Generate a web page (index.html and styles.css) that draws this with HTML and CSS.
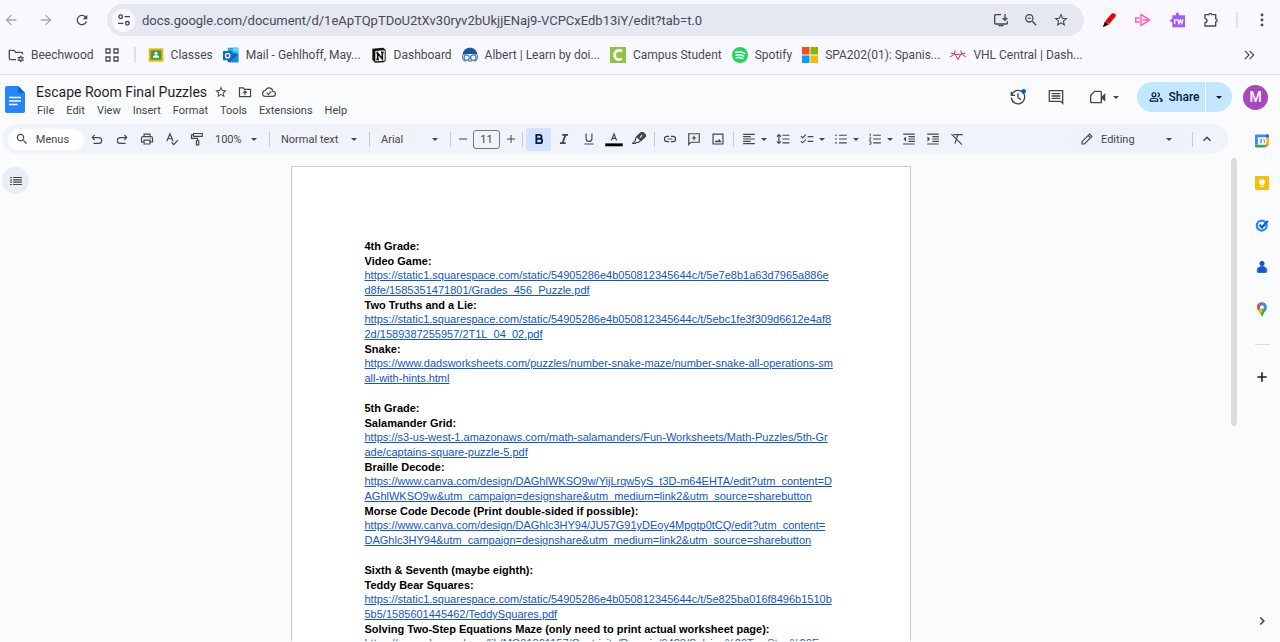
FILE: index.html
```html
<!DOCTYPE html>
<html lang="en">
<head>
<meta charset="utf-8">
<title>Escape Room Final Puzzles</title>
<link rel="stylesheet" href="styles.css">
</head>
<body>
<nav class="browser-bar" aria-label="Browser">
  <button class="nav-btn faded" aria-label="Back"><svg viewBox="0 0 24 24"><path d="M20 11H7.8l5.6-5.6L12 4l-8 8 8 8 1.4-1.4L7.8 13H20z"/></svg></button>
  <button class="nav-btn faded" aria-label="Forward"><svg viewBox="0 0 24 24"><path d="M12 4l-1.4 1.4 5.6 5.6H4v2h12.2l-5.6 5.6L12 20l8-8z"/></svg></button>
  <button class="nav-btn" aria-label="Reload"><svg viewBox="0 0 24 24"><path d="M17.65 6.35A8 8 0 1 0 19.73 14h-2.08A6 6 0 1 1 12 6c1.66 0 3.14.69 4.22 1.78L13 11h7V4z"/></svg></button>
  <div class="omnibox">
    <button class="site-info" aria-label="Site information"><svg viewBox="0 0 24 24" class="line"><circle cx="7" cy="7" r="2.7"/><path d="M13 7h8M3 17h8"/><circle cx="17" cy="17" r="2.7"/></svg></button>
    <input class="url" type="text" aria-label="Address" value="docs.google.com/document/d/1eApTQpTDoU2tXv30ryv2bUkjjENaj9-VCPCxEdb13iY/edit?tab=t.0">
    <button class="bar-icon" aria-label="Install"><svg viewBox="0 0 24 24" class="line"><path d="M12 4H4a1.500 1.500 0 0 0-1.500 1.500v11A1.500 1.500 0 0 0 4 18h16a1.500 1.500 0 0 0 1.500-1.500V14M18 3v9M14.500 9l3.500 3.500L21.500 9M8 20.500h8"/></svg></button>
    <button class="bar-icon" aria-label="Zoom"><svg viewBox="0 0 24 24"><path d="M15.500 14h-.8l-.3-.3A6.500 6.500 0 1 0 13.700 14.400l.3.3v.8l5 5 1.500-1.500zm-6 0a4.500 4.500 0 1 1 0-9 4.500 4.500 0 0 1 0 9zM7 8.700h5v1.600H7z"/></svg></button>
    <button class="bar-icon" aria-label="Bookmark this tab"><svg viewBox="0 0 24 24"><path d="M22 9.240l-7.190-.62L12 2 9.190 8.630 2 9.240l5.460 4.730L5.820 21 12 17.270 18.180 21l-1.630-7.030zM12 15.400l-3.760 2.270 1-4.280-3.320-2.880 4.380-.38L12 6.100l1.710 4.040 4.380.38-3.320 2.880 1 4.280z"/></svg></button>
  </div>
  <div class="extensions">
    <button class="ext-btn" aria-label="Pen extension"><svg viewBox="0 0 24 24"><path fill="#e00" d="M20.500 2.500c2 1 2.500 2.500 1.200 4.400L12.500 18 6.500 13.500 14.500 4c1.500-1.800 3.500-2.500 6-1.500z"/><path fill="#300" d="M6 14l6 4.500L4 22.500l-1-.8z"/></svg></button>
    <button class="ext-btn" aria-label="Screencast extension"><svg viewBox="0 0 24 24" fill="none" stroke="#ff5ab8" stroke-width="2.200"><path d="M9 4v16l13-8z"/><path d="M1 9h6M1 15h6M1 8v8M11 12h9"/></svg></button>
    <button class="ext-btn" aria-label="Read and write extension"><svg viewBox="0 0 24 24"><path fill="#a259ff" d="M5 5h5.500V3a2.200 2.200 0 0 1 4.400 0v2H24v18H5v-8H3a2.200 2.200 0 0 1 0-4h2z"/><path fill="none" stroke="#fff" stroke-width="2" d="M8.500 18v-7M8.500 14q1-2.500 3.500-2M13 11l2 6 2-5 2 5 2-6"/></svg></button>
    <button class="ext-btn" aria-label="Extensions"><svg viewBox="0 0 24 24" class="line"><path d="M3 4h6.200a2 2 0 0 1 4 0H19v6.200a2.300 2.300 0 0 1 0 4.600V21H3v-5a3 3 0 0 0 0-6z"/></svg></button>
    <span class="bar-rule"></span>
    <button class="ext-btn" aria-label="Browser menu"><svg viewBox="0 0 24 24"><circle cx="12" cy="4.500" r="2.200"/><circle cx="12" cy="12" r="2.200"/><circle cx="12" cy="19.500" r="2.200"/></svg></button>
  </div>
</nav>

<nav class="bookmarks" aria-label="Bookmarks">
  <a href="#"><svg viewBox="0 0 24 24" class="line"><path d="M12 19H4a2 2 0 0 1-2-2V5h7l2.500 3H20a2 2 0 0 1 2 2v1"/><circle cx="19" cy="18" r="2.600"/><path d="M19 13v2m0 6v2m-4.500-7.500l1.700 1m5.600 3l1.700 1m0-5l-1.700 1m-5.600 3l-1.700 1"/></svg>Beechwood</a>
  <a href="#" aria-label="Apps"><svg viewBox="0 0 24 24" class="line"><path d="M3 3h6v6H3zM15 3h6v6h-6zM3 15h6v6H3zM15 15h6v6h-6z"/></svg></a>
  <span class="bar-rule"></span>
  <a href="#"><svg viewBox="0 0 24 24"><path fill="#f4b400" d="M1 2h22v20H1z"/><path fill="#3c9a50" d="M4 5h16v14H4z"/><circle cx="12" cy="9.500" r="2.300" fill="#fff"/><path fill="#fff" d="M7.500 16v-1.500c0-3 9-3 9 0V16z"/></svg>Classes</a>
  <a href="#"><svg viewBox="0 0 24 24"><path fill="#28a8ea" d="M7 1h16v11H7z"/><path fill="#50d9ff" d="M15 1h8v6h-8z"/><path fill="#0a64b8" d="M7 8l16 3v12H7z"/><path fill="#1490df" d="M23 11v12H9z"/><rect y="6" width="14" height="14" rx="1" fill="#0f6cbd"/><circle cx="7" cy="13" r="3.200" fill="none" stroke="#fff" stroke-width="2"/></svg>Mail - Gehlhoff, May...</a>
  <a href="#"><svg viewBox="0 0 24 24"><path fill="#111" d="M2 2.500L18 1l4 3v17l-3 2-13 .5L2 19z"/><path fill="#fff" d="M6.500 6L20.500 5v15.500l-14 1z"/><path fill="none" stroke="#111" stroke-width="2.400" d="M10 18V9l7 9V8M8 9h3M15 8h4M8 18.500h4"/></svg>Dashboard</a>
  <a href="#"><svg viewBox="0 0 24 24"><path fill="#18589c" d="M1 12C1 5 6 1 12 1s11 4 11 11c-6-2-16-2-22 0z"/><g fill="#fff" stroke="#3978b5" stroke-width="1.800"><circle cx="7" cy="16" r="4"/><circle cx="17" cy="16" r="4"/></g><path fill="none" stroke="#3978b5" stroke-width="1.500" d="M1 12v5q1 4 4 5M23 12v5q-1 4-4 5M9 21h6"/></svg>Albert | Learn by doi...</a>
  <a href="#"><svg viewBox="0 0 24 24"><path fill="#8cc63f" d="M0 0h24v24H0z"/><path fill="none" stroke="#fff" stroke-width="4" d="M18 6.500c-5-3-11-1-11 5.500s6 8.500 11 5.500"/></svg>Campus Student</a>
  <a href="#"><svg viewBox="0 0 24 24"><circle cx="12" cy="12" r="12" fill="#1ed760"/><path fill="none" stroke="#fff" stroke-width="2.300" stroke-linecap="round" d="M5.500 8q7-2 13.500 1.500M6 12.300q6-1.800 11.500 1.300M6.500 16.300q5-1.500 9.500 1"/></svg>Spotify</a>
  <a href="#"><svg viewBox="0 0 24 24"><path fill="#f25022" d="M0 0h11.300v11.300H0z"/><path fill="#7fba00" d="M12.700 0H24v11.300H12.700z"/><path fill="#00a4ef" d="M0 12.700h11.300V24H0z"/><path fill="#ffb900" d="M12.700 12.700H24V24H12.700z"/></svg>SPA202(01): Spanis...</a>
  <a href="#"><svg viewBox="0 0 24 24" fill="none" stroke="#d8343f" stroke-width="1.500"><path d="M0 15l6-4 2-6M24 15l-6-4-2-6M1 9l7 2 4 8 4-8 7-2M8 11h8"/></svg>VHL Central | Dash...</a>
  <button class="overflow" aria-label="More bookmarks"><svg viewBox="0 0 24 24" class="line"><path d="M5 5l7 7-7 7M13 5l7 7-7 7"/></svg></button>
</nav>

<header class="doc-header">
  <a href="#" class="docs-logo" aria-label="Docs home"><svg viewBox="0 0 20 27"><path fill="#2684fc" d="M2 0h11l7 7v18a2 2 0 0 1-2 2H2a2 2 0 0 1-2-2V2a2 2 0 0 1 2-2z"/><path fill="#0066da" d="M13 0l7 7h-5a2 2 0 0 1-2-2z"/><path stroke="#fff" stroke-width="1.500" d="M4 11.500h12M4 15h12M4 18.500h8.500"/></svg></a>
  <div class="doc-heading">
    <div class="title-row">
      <h1>Escape Room Final Puzzles</h1>
      <button class="small-icon" aria-label="Star"><svg viewBox="0 0 24 24"><path d="M22 9.240l-7.190-.62L12 2 9.190 8.630 2 9.240l5.460 4.730L5.820 21 12 17.270 18.180 21l-1.630-7.030zM12 15.400l-3.760 2.270 1-4.280-3.320-2.880 4.380-.38L12 6.100l1.710 4.040 4.380.38-3.320 2.880 1 4.280z"/></svg></button>
      <button class="small-icon" aria-label="Move"><svg viewBox="0 0 24 24" class="line"><path d="M2.500 5H9l2 2.500h10.500V20h-19zM12 17.500v-7M8.800 13.500l3.200-3.200 3.200 3.200"/></svg></button>
      <button class="small-icon" aria-label="Document status"><svg viewBox="0 0 24 24" class="line"><path d="M6.500 19.500C3.500 19.500 1 17.500 1 14.500c0-2.700 2-4.700 4.700-5C7 6.500 9.300 4.800 12 4.800c3.500 0 6 2.400 6.500 5.900 2.700.2 4.500 2 4.500 4.400 0 2.500-2 4.400-4.500 4.400zM8 13l3 3 5-5"/></svg></button>
    </div>
    <nav class="menus" aria-label="Document menus">
      <button>File</button><button>Edit</button><button>View</button><button>Insert</button><button>Format</button><button>Tools</button><button>Extensions</button><button>Help</button>
    </nav>
  </div>
  <div class="doc-actions">
    <button class="action" aria-label="Version history"><svg viewBox="0 0 24 24" class="line"><path d="M2 4v5.500h5.500M2.500 9A10 10 0 1 1 2 13M12 6.500V13l4.500 3"/><circle cx="20.500" cy="3.500" r="3.500" fill="#0b57d0" stroke="none"/></svg></button>
    <button class="action" aria-label="Comments"><svg viewBox="0 0 24 24" class="line"><path d="M2 2.500h20V21.500l-3-3H2zM5.500 7h13M5.500 10.500h13M5.500 14h13"/></svg></button>
    <button class="action meet" aria-label="Meet"><svg viewBox="0 0 24 24" class="line"><path d="M7 3.500h8a2 2 0 0 1 2 2V20.500H2a1 1 0 0 1-1-1V9.500z"/><path d="M17 12l6-6v13l-6-5z" fill="#444746" stroke="none"/></svg><i class="caret"></i></button>
    <div class="share">
      <button class="share-main"><svg viewBox="0 0 24 24" class="line"><circle cx="8.500" cy="8" r="3.300"/><path d="M2 19v-1.500c0-4.500 13-4.500 13 0V19zM14.500 4.700a3.300 3.300 0 1 1 0 6.600M18 14c3 .8 4.500 2 4.500 5h-3.500"/></svg>Share</button>
      <button class="share-more" aria-label="Sharing options"><i class="caret"></i></button>
    </div>
    <button class="avatar" aria-label="Account">M</button>
  </div>
</header>

<div class="workspace">
  <div class="editor">
    <div class="toolbar" role="toolbar" aria-label="Formatting">
      <button class="menu-search"><svg viewBox="0 0 24 24"><path d="M15.500 14h-.8l-.3-.3A6.500 6.500 0 1 0 13.700 14.400l.3.3v.8l5 5 1.500-1.500zm-6 0a4.500 4.500 0 1 1 0-9 4.500 4.500 0 0 1 0 9z"/></svg>Menus</button>
      <button class="tool" aria-label="Undo"><svg viewBox="0 0 24 24" class="line"><path d="M8 5L4 9.500 8 14M4.500 9.500H15a5 5 0 0 1 0 10H6"/></svg></button>
      <button class="tool" aria-label="Redo"><svg viewBox="0 0 24 24" class="line"><path d="M16 5l4 4.500-4 4.500M19.500 9.500H9a5 5 0 0 0 0 10h9"/></svg></button>
      <button class="tool" aria-label="Print"><svg viewBox="0 0 24 24" class="line"><path d="M7 8V3.500h10V8M6.500 17H2.500v-6a3 3 0 0 1 3-3h13a3 3 0 0 1 3 3v6h-4M7 14h10v6.500H7z"/><path d="M17 11.200h1.500"/></svg></button>
      <button class="tool" aria-label="Spelling"><svg viewBox="0 0 24 24" class="line"><path d="M3 16L8.500 3 14 16M5 11.500h7M11 17.500l4 4 7-7.500"/></svg></button>
      <button class="tool" aria-label="Paint format"><svg viewBox="0 0 24 24" class="line"><path d="M6 2.500h15v5H6zM6 5H2.500v6H13v4M11 15h4v7h-4z"/></svg></button>
      <label class="pick zoom"><select aria-label="Zoom"><option>100%</option></select><i class="caret"></i></label>
      <span class="rule"></span>
      <label class="pick style"><select aria-label="Styles"><option>Normal text</option></select><i class="caret"></i></label>
      <span class="rule"></span>
      <label class="pick font"><select aria-label="Font"><option>Arial</option></select><i class="caret"></i></label>
      <span class="rule"></span>
      <button class="step" aria-label="Decrease font size"><svg viewBox="0 0 24 24" class="line"><path d="M4 12h16"/></svg></button>
      <input class="size" type="text" aria-label="Font size" value="11">
      <button class="step" aria-label="Increase font size"><svg viewBox="0 0 24 24" class="line"><path d="M4 12h16M12 4v16"/></svg></button>
      <span class="rule"></span>
      <button class="tool active" aria-label="Bold"><svg viewBox="0 0 24 24" fill="none" stroke="#041e49" stroke-width="3.200"><path d="M7.500 5h5.500a3.300 3.300 0 0 1 0 6.600H7.500zM7.500 11.600h6.300a3.700 3.700 0 0 1 0 7.400H7.500z"/></svg></button>
      <button class="tool" aria-label="Italic"><svg viewBox="0 0 24 24" class="line heavy"><path d="M9 5h10M5 19h10M14.500 5l-5 14"/></svg></button>
      <button class="tool" aria-label="Underline"><svg viewBox="0 0 24 24" class="line"><path d="M7 2.500V11a5 5 0 0 0 10 0V2.500M4 20.500h16"/></svg></button>
      <button class="tool" aria-label="Text color"><svg viewBox="0 0 24 24" class="wide-icon line"><path d="M7.500 14.500L12 3l4.500 11.500M9 11h6"/><path d="M-3 22h30" stroke="#000" stroke-width="5"/></svg></button>
      <button class="tool" aria-label="Highlight color"><svg viewBox="0 0 24 24" class="line"><path d="M8.500 8L15 14.500 11 18H7.500L6 19.500H1l5-5V11zM8.500 8L16 .8h2.500L23 5v2.500L15 14.500"/><path d="M9 7.500L16 1h2.500L22.500 5v2.500L16 14z" fill="#444746"/><path d="M13.500 9.500l4-4" stroke="#f0f3f9"/></svg></button>
      <span class="rule wide"></span>
      <button class="tool" aria-label="Insert link"><svg viewBox="0 0 24 24" class="line"><path d="M10.500 7.500H7a4.500 4.500 0 0 0 0 9h3.500M13.500 7.500H17a4.500 4.500 0 0 1 0 9h-3.500M8 12h8"/></svg></button>
      <button class="tool" aria-label="Add comment"><svg viewBox="0 0 24 24" class="line"><path d="M3 21.500V3h18v14.500H7zM12 6.500v7.500M8.200 10.300h7.600"/></svg></button>
      <button class="tool" aria-label="Insert image"><svg viewBox="0 0 24 24" class="line"><path d="M3.500 3.500h17v17h-17z"/><path d="M6 17.500l3-4 2.200 2.500 3-4 4 5.500z" fill="#444746" stroke="none"/></svg></button>
      <span class="rule"></span>
      <button class="tool drop" aria-label="Align"><svg viewBox="0 0 24 24" class="line"><path d="M2 4h20M2 8h13M2 12h20M2 16h13M2 20h20"/></svg><i class="caret"></i></button>
      <button class="tool" aria-label="Line spacing"><svg viewBox="0 0 24 24" class="line"><path d="M11 5.500h12M11 12h12M11 18.500h12M5 5v14M1.500 8L5 4.500 8.500 8M1.500 16L5 19.500 8.500 16"/></svg></button>
      <button class="tool drop" aria-label="Checklist"><svg viewBox="0 0 24 24" class="line"><path d="M13 8h10M13 16h10M1.500 7l3 3L10 4.500M1.500 15.500l3 3 5.500-5.500"/></svg><i class="caret"></i></button>
      <button class="tool drop" aria-label="Bulleted list"><svg viewBox="0 0 24 24" class="line"><path d="M8.500 5.500H22M8.500 12H22M8.500 18.500H22M2 5.500h3M2 12h3M2 18.500h3"/></svg><i class="caret"></i></button>
      <button class="tool drop" aria-label="Numbered list"><svg viewBox="0 0 24 24" class="line"><path d="M9 5.500h13M9 12h13M9 18.500h13"/><path stroke-width="1.300" d="M2.500 3.500H4v4M2 10h3.500L2 14h3.500M2 16.500h3.200v4.500H2M3 18.700h2"/></svg><i class="caret"></i></button>
      <button class="tool" aria-label="Decrease indent"><svg viewBox="0 0 24 24" class="line"><path d="M2 3.500h20M11 8h11M11 12h11M11 16h11M2 20.500h20"/><path d="M7 7.500v9L2.500 12z" fill="#444746" stroke="none"/></svg></button>
      <button class="tool" aria-label="Increase indent"><svg viewBox="0 0 24 24" class="line"><path d="M2 3.500h20M11 8h11M11 12h11M11 16h11M2 20.500h20"/><path d="M2.500 7.500v9L7 12z" fill="#444746" stroke="none"/></svg></button>
      <button class="tool" aria-label="Clear formatting"><svg viewBox="0 0 24 24" class="line"><path d="M6 4.500h16M13.500 4.500L8.500 20M2.500 3.500l18 18"/></svg></button>
      <label class="pick mode"><svg viewBox="0 0 24 24" class="line"><path d="M3.500 20.500v-4L16.500 3.500l4 4-13 13zM14 6l4 4"/></svg><select aria-label="Mode"><option>Editing</option></select><i class="caret"></i></label>
      <span class="rule"></span>
      <button class="collapse" aria-label="Hide the menus"><svg viewBox="0 0 24 24" class="line heavy"><path d="M5 15.500l7-7 7 7"/></svg></button>
    </div>

    <div class="canvas">
      <button class="outline" aria-label="Show outline"><svg viewBox="0 0 24 24" class="line"><path d="M7 6h15M7 10h15M7 14h15M7 18h15M2 6h3M2 10h3M2 14h3M2 18h3"/></svg></button>
      <main class="page">
        <section>
          <h2>4th Grade:</h2>
          <h2>Video Game:</h2>
          <p><a href="#">https://static1.squarespace.com/static/54905286e4b050812345644c/t/5e7e8b1a63d7965a886e<br>d8fe/1585351471801/Grades_456_Puzzle.pdf</a></p>
          <h2>Two Truths and a Lie:</h2>
          <p><a href="#">https://static1.squarespace.com/static/54905286e4b050812345644c/t/5ebc1fe3f309d6612e4af8<br>2d/1589387255957/2T1L_04_02.pdf</a></p>
          <h2>Snake:</h2>
          <p><a href="#">https://www.dadsworksheets.com/puzzles/number-snake-maze/number-snake-all-operations-sm<br>all-with-hints.html</a></p>
        </section>
        <section>
          <h2>5th Grade:</h2>
          <h2>Salamander Grid:</h2>
          <p><a href="#">https://s3-us-west-1.amazonaws.com/math-salamanders/Fun-Worksheets/Math-Puzzles/5th-Gr<br>ade/captains-square-puzzle-5.pdf</a></p>
          <h2>Braille Decode:</h2>
          <p><a href="#">https://www.canva.com/design/DAGhlWKSO9w/YijLrqw5yS_t3D-m64EHTA/edit?utm_content=D<br>AGhlWKSO9w&amp;utm_campaign=designshare&amp;utm_medium=link2&amp;utm_source=sharebutton</a></p>
          <h2>Morse Code Decode (Print double-sided if possible):</h2>
          <p><a href="#">https://www.canva.com/design/DAGhlc3HY94/JU57G91yDEoy4Mpgtp0tCQ/edit?utm_content=<br>DAGhlc3HY94&amp;utm_campaign=designshare&amp;utm_medium=link2&amp;utm_source=sharebutton</a></p>
        </section>
        <section>
          <h2>Sixth &amp; Seventh (maybe eighth):</h2>
          <h2>Teddy Bear Squares:</h2>
          <p><a href="#">https://static1.squarespace.com/static/54905286e4b050812345644c/t/5e825ba016f8496b1510b<br>5b5/1585601445462/TeddySquares.pdf</a></p>
          <h2>Solving Two-Step Equations Maze (only need to print actual worksheet page):</h2>
          <p><a href="#">https://www.slps.org/cms/lib/MO01001157/Centricity/Domain/9483/Solving%20TwoStep%20Equ</a></p>
        </section>
      </main>
      <div class="track"><div class="thumb"></div></div>
    </div>
  </div>

  <aside class="rail" aria-label="Side panel">
    <button aria-label="Calendar"><svg viewBox="0 0 24 24"><path fill="#4285f4" d="M0 3a2 2 0 0 1 2-2h20v5H5v12H0z"/><path fill="#fbbc04" d="M19 6h5v12h-5z"/><path fill="#34a853" d="M0 18h18v5H2a2 2 0 0 1-2-2z"/><path fill="#ea4335" d="M18 23v-5h6z"/><path fill="#1967d2" d="M19 1h3a2 2 0 0 1 2 2v3h-5z"/><path fill="#fff" d="M5 6h14v12H5z"/><path fill="none" stroke="#4285f4" stroke-width="1.500" d="M8 9h3v6H8M8.500 12H11M14 10l2-1v7"/></svg></button>
    <button aria-label="Keep"><svg viewBox="0 0 24 24"><rect width="24" height="24" rx="2" fill="#fbbc04"/><circle cx="12" cy="10" r="5" fill="#fff"/><path fill="#fff" d="M9.500 13h5v3h-5zM9.500 17h5v2h-5z"/></svg></button>
    <button aria-label="Tasks"><svg viewBox="0 0 24 24" fill="none"><circle cx="11.500" cy="13" r="8.500" stroke="#2684fc" stroke-width="3.800"/><path d="M7.500 11.500l4.500 4.500L22 5" stroke="#0066da" stroke-width="4"/></svg></button>
    <button aria-label="Contacts"><svg viewBox="0 0 24 24"><circle cx="12" cy="6" r="4.300" fill="#0b57d0"/><path fill="#2f7bf0" d="M3 17c0-8 18-8 18 0v3q0 2-2 2H5q-2 0-2-2z"/><path fill="#0b57d0" d="M6 13c2-3 10-3 12 0v9H6z"/></svg></button>
    <button aria-label="Maps"><svg viewBox="0 0 24 24"><path fill="#34a853" d="M20.500 9c0 6-6 8-7 15h-2.500C10 19 5 15 4 11z"/><path fill="#fbbc04" d="M4 11l5-1 5 4-4 6c-2-4-5-6-6-9z"/><path fill="#ea4335" d="M4 11C2.500 6 4 3 6.500 2L12 8l-7 6z"/><path fill="#4285f4" d="M6 2.500C10-1 19-.5 20.500 8L13 15l-4-7z"/><circle cx="12" cy="9" r="3.300" fill="#fff"/></svg></button>
    <span class="rail-rule"></span>
    <button aria-label="Get add-ons"><svg viewBox="0 0 24 24" fill="none" stroke="#1f1f1f" stroke-width="2.800"><path d="M12 4v16M4 12h16"/></svg></button>
    <button class="rail-toggle" aria-label="Hide side panel"><svg viewBox="0 0 24 24" class="line heavy"><path d="M9 6l6 6-6 6"/></svg></button>
  </aside>
</div>
</body>
</html>
```
FILE: styles.css
```css
* { box-sizing: border-box; }

body {
  margin: 0;
  height: 100vh;
  display: flex;
  flex-direction: column;
  overflow: hidden;
  background: #f9fbfd;
  color: #444746;
  font-family: Roboto, "Noto Sans", sans-serif;
  font-size: 11px;
}

button, input, select {
  margin: 0;
  padding: 0;
  border: 0;
  background: none;
  color: inherit;
  font: inherit;
}

button {
  display: flex;
  align-items: center;
  justify-content: center;
  flex: none;
}

svg { flex: none; fill: currentColor; width: 16px; height: 16px; }
svg.line { fill: none; stroke: currentColor; stroke-width: 2; }
svg.heavy { stroke-width: 3; }
svg[fill="none"] { fill: none; }
svg.wide-icon { overflow: visible; }

.caret {
  flex: none;
  border: 3px solid transparent;
  border-top-color: currentColor;
  border-bottom: 0;
}

/* Browser chrome */
.browser-bar {
  flex: none;
  display: flex;
  align-items: center;
  height: 40px;
  padding-right: 6px;
  background: #faf8ff;
}
.nav-btn { width: 24px; color: #414659; }
.nav-btn:first-child { width: 22px; }
.nav-btn:nth-child(2) { width: 48px; }
.faded { color: #a5a5ab; }
.omnibox {
  flex: 1;
  display: flex;
  align-items: center;
  height: 32px;
  margin-left: 13px;
  padding: 0 8px 0 5px;
  border-radius: 16px;
  background: #e5e7f3;
}
.site-info { width: 23px; height: 23px; border-radius: 50%; background: #faf8ff; }
.url { flex: 1; min-width: 0; margin-left: 7px; font-size: 13px; color: #474a52; }
.bar-icon { width: 30px; }
.extensions { display: flex; align-items: center; margin-left: 8px; }
.ext-btn { width: 34px; color: #474a58; }
.ext-btn:last-child { width: 24px; }
.bar-rule { flex: none; width: 2px; height: 16px; background: #d3e3fd; }
.extensions .bar-rule { margin: 0 12px 0 8px; }

.bookmarks {
  flex: none;
  display: flex;
  align-items: center;
  gap: 10px;
  height: 35px;
  padding: 0 24px 5px 8px;
  border-bottom: 1px solid #e1e1e8;
  background: #faf8ff;
  font-size: 12px;
}
.bookmarks a { display: flex; align-items: center; gap: 7px; color: #474a52; text-decoration: none; white-space: nowrap; }
.bookmarks .bar-rule { margin: 0 2px 0 4px; }
.overflow { margin-left: auto; }
.overflow svg { width: 14px; height: 14px; }

/* Document header */
.doc-header { flex: none; display: flex; height: 49px; padding: 7px 12px 0 5px; }
.docs-logo { width: 20px; margin-top: 4px; }
.docs-logo svg { width: 20px; height: 27px; }
.doc-heading { margin-left: 11px; }
.title-row { display: flex; align-items: center; gap: 10px; height: 20px; }
.title-row h1 { margin: 0 -3px 0 0; font-size: 14px; font-weight: 400; color: #1f1f1f; white-space: nowrap; }
.small-icon svg { width: 14px; height: 14px; }
.menus { display: flex; gap: 12px; height: 16px; padding-left: 1px; }
.doc-actions { display: flex; align-items: center; height: 30px; margin-left: auto; }
.action { width: 38px; }
.meet { width: 42px; gap: 7px; margin: 0 12px 0 8px; }
.share { display: flex; gap: 1px; height: 30px; margin-right: 11px; color: #001d35; font-weight: 500; font-size: 12px; }
.share button { background: #c2e7ff; }
.share-main { gap: 6px; width: 68px; padding-left: 6px; border-radius: 15px 0 0 15px; }
.share-main svg { width: 14px; height: 14px; }
.share-more { width: 26px; border-radius: 0 15px 15px 0; }
.avatar { width: 25px; height: 25px; border-radius: 50%; background: #ab47bc; color: #fff; font-size: 14px; font-weight: 500; }

/* Workspace */
.workspace { flex: 1; display: flex; min-height: 0; padding-bottom: 1px; }
.editor { flex: 1; display: flex; flex-direction: column; min-width: 0; }

.toolbar {
  flex: none;
  display: flex;
  align-items: center;
  height: 30px;
  margin: 0 16px 0 2px;
  padding: 0 10px 0 6px;
  border-radius: 15px;
  background: #f0f3f9;
}
.toolbar svg { width: 14px; height: 14px; }
.menu-search { width: 76px; height: 21px; gap: 7px; padding-right: 8px; border-radius: 11px; background: #fff; }
.tool { width: 25px; height: 23px; }
.tool.active { border-radius: 3px; background: #d3e3fd; }
.rule { flex: none; width: 1px; height: 15px; margin: 0 3px; background: #c7c9cc; }
.rule.wide ~ .tool { width: 24px; }
.rule.wide ~ .drop { width: 34px; gap: 5px; }
.pick { display: flex; align-items: center; height: 23px; padding: 0 9px 0 6px; }
.pick select { flex: 1; min-width: 0; appearance: none; }
.zoom { width: 57px; }
.style { width: 93px; padding-left: 8px; }
.font { width: 74px; padding-left: 8px; }
.step { width: 17px; }
.step svg { width: 12px; height: 12px; }
.size { width: 27px; height: 19px; margin: 0 2px; border: 1px solid #747775; border-radius: 3px; text-align: center; }
.mode { width: 114px; margin: 0 4px 0 auto; padding: 0 13px 0 9px; gap: 7px; border-radius: 12px; background: #edf2fa; }
.collapse { width: 22px; }
.toolbar .collapse svg { width: 12px; height: 12px; }

.canvas {
  flex: 1;
  display: grid;
  grid-template-columns: 30px 1fr 73px;
  min-height: 0;
  overflow: hidden;
}
.outline { width: 27px; height: 27px; margin: 13px 0 0 2px; border-radius: 50%; background: #e8edf6; }
.outline svg { width: 14px; height: 14px; }
.page {
  justify-self: center;
  width: 620px;
  margin-top: 12px;
  padding: 72px 70px 0 73px;
  border: 1px solid #c7c9cc;
  border-bottom: 0;
  background: #fff;
  color: #000;
  font-family: "Liberation Sans", Arial, sans-serif;
  font-size: 11px;
}
.page section { margin-bottom: 15px; }
.page h2 { margin: 0; font-size: 11px; line-height: 14px; }
.page h2:first-child { line-height: 15px; }
.page p { margin: 0; line-height: 15px; white-space: nowrap; }
.page a { color: #1155cc; }
.track { display: flex; justify-content: flex-end; padding: 4px 7px 0 0; }
.thumb { width: 6px; height: 268px; border-radius: 3px; background: #dadce0; }

.rail { flex: none; display: flex; flex-direction: column; align-items: center; gap: 18px; width: 36px; padding: 5px 0 8px; }
.rail button { width: 24px; height: 24px; }
.rail svg { width: 14px; height: 14px; }
.rail-rule { flex: none; width: 15px; height: 1px; margin: 5px 0 2px; background: #dadce0; }
.rail .rail-toggle { margin-top: auto; }
```
